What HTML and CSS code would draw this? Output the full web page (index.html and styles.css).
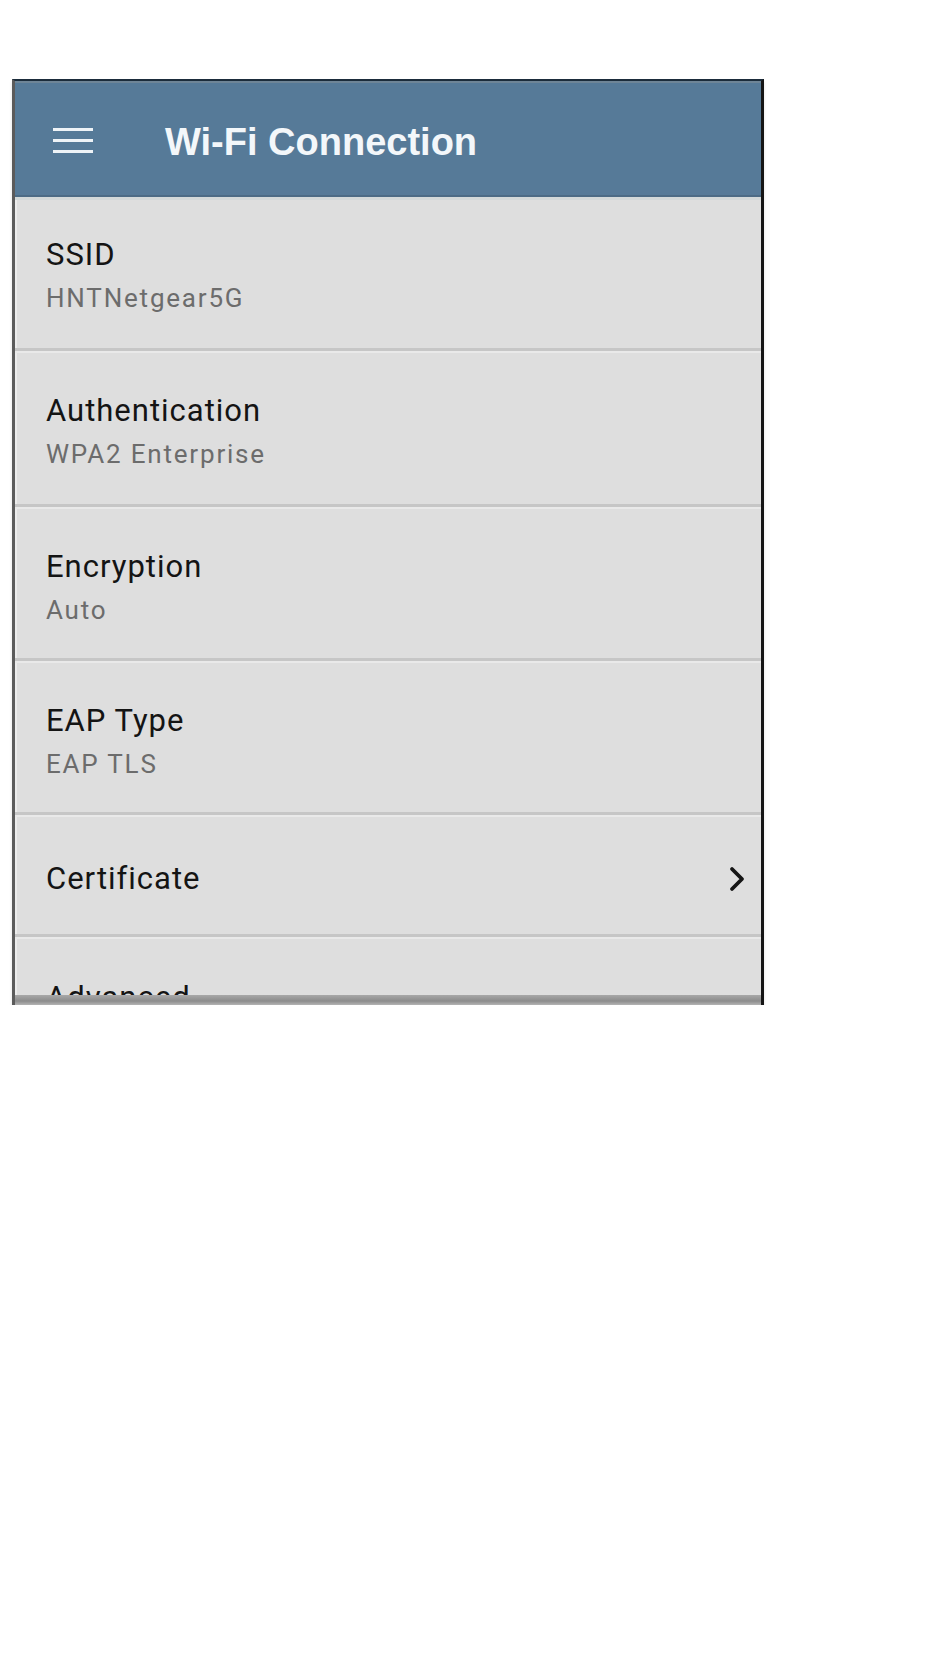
FILE: index.html
```html
<!DOCTYPE html>
<html lang="en">
<head>
  <meta charset="UTF-8" />
  <meta name="viewport" content="width=device-width, initial-scale=1.0"/>
  <title>Wi-Fi Connection</title>
  <link rel="stylesheet" href="styles.css">
</head>
<body>
  <div class="device">
    <header class="appbar">
      <span class="menu"><i></i><i></i><i></i></span>
      <h1>Wi-Fi Connection</h1>
    </header>

    <ul class="settings">
      <li class="item">
        <div class="label">SSID</div>
        <div class="value">HNTNetgear5G</div>
      </li>
      <li class="item item-tall">
        <div class="label">Authentication</div>
        <div class="value">WPA2 Enterprise</div>
      </li>
      <li class="item">
        <div class="label">Encryption</div>
        <div class="value">Auto</div>
      </li>
      <li class="item">
        <div class="label">EAP Type</div>
        <div class="value">EAP TLS</div>
      </li>
      <li class="item item-link">
        <span class="label">Certificate</span>
        <svg class="chevron" width="20" height="28" viewBox="0 0 20 28">
          <polyline points="5,4 15,14 5,24" fill="none" stroke="#151515" stroke-width="3.8" stroke-linecap="round" stroke-linejoin="round"/>
        </svg>
      </li>
      <li class="item item-link">
        <span class="label">Advanced</span>
      </li>
    </ul>
  </div>
</body>
</html>
```

FILE: styles.css
```css
body { margin: 0; background: #fff; }

.device {
  position: relative;
  box-sizing: border-box;
  width: 752px;
  height: 926px;
  margin: 79px 0 0 12px;
  border-top: 2px solid #1b2c3b;
  border-left: 3px solid #5b5b5b;
  border-right: 3px solid #151515;
  background: #dedede;
  overflow: hidden;
  box-shadow: 0 3px 3px rgba(0, 0, 0, 0.12);
}

/* bottom toolbar shadow over the last row */
.device::after {
  content: "";
  position: absolute;
  left: 0;
  right: 0;
  bottom: 0;
  height: 10px;
  background: linear-gradient(to bottom, #a8a8a8 0, #8c8c8c 60%, #b4b4b4 100%);
}

.appbar {
  display: flex;
  align-items: center;
  height: 116px;
  padding-left: 38px;
  background: #567a98;
  box-shadow: inset 0 2px #6e8597, inset 0 -2px #4c6b85;
}

.menu { display: flex; flex-direction: column; gap: 8px; width: 40px; margin-top: 2px; }
.menu i { display: block; height: 3px; background: #eef3f7; }

.appbar h1 {
  margin: 6px 0 0 72px;
  font-family: "Liberation Sans", Arial, sans-serif;
  font-weight: bold;
  font-size: 38px;
  color: #f3f7fa;
}

.settings { margin: 0; padding: 0; list-style: none; }

.item {
  box-sizing: border-box;
  height: 154px;
  padding: 43px 14px 0 31px;
  border-bottom: 3px solid #c6c6c6;
  box-shadow: inset 0 2px #e9e9e9, inset 2px 0 #ebebeb;
  font-family: Roboto, "Liberation Sans", sans-serif;
}
.item:first-child { padding-top: 41px; box-shadow: inset 0 3px #d3d9d9, inset 2px 0 #ebebeb; }
.item-tall { height: 156px; }

.label { font-size: 31px; line-height: 34px; letter-spacing: 1px; color: #141414; }
.value { margin-top: 11px; font-size: 26px; line-height: 30px; letter-spacing: 1.8px; color: #6c6c6c; }

.item-link {
  display: flex;
  align-items: center;
  justify-content: space-between;
  height: 122px;
  padding-top: 8px;
}
.item-link:last-child { align-items: flex-start; padding-top: 44px; }
```
